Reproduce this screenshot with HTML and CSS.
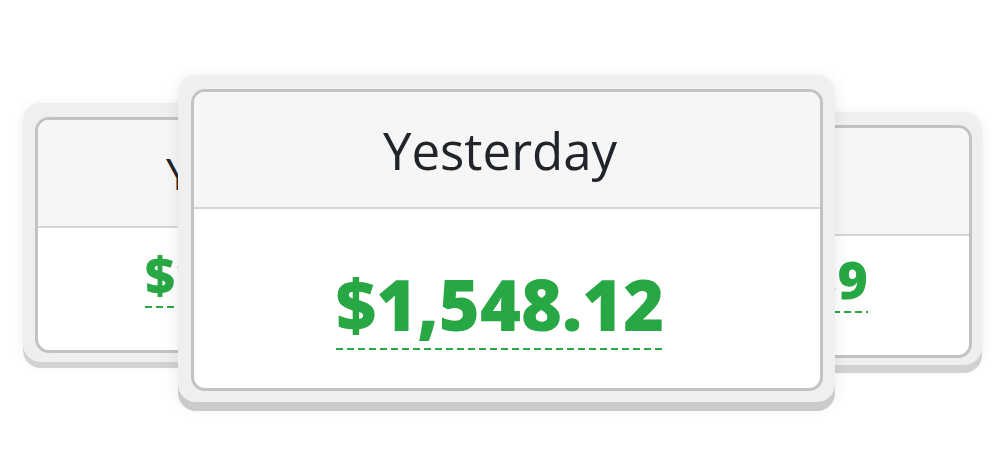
FILE: index.html
```html
<!DOCTYPE html>
<html lang="en">
<head>
<meta charset="utf-8">
<title>Stats carousel</title>
<link rel="stylesheet" href="styles.css">
</head>
<body>
<div class="stage">
  <div class="shell shell-left">
    <div class="card">
      <div class="card-head side-head">Yesterday</div>
      <div class="card-body side-body"><span class="amount side-amount">$1,231.40</span></div>
    </div>
  </div>
  <div class="shell shell-right">
    <div class="card">
      <div class="card-head side-head">Today</div>
      <div class="card-body side-body right-body"><span class="amount side-amount">$1,204.39</span></div>
    </div>
  </div>
  <div class="shell shell-main">
    <div class="card">
      <div class="card-head main-head"><span class="head-text">Yesterday</span></div>
      <div class="card-body main-body"><span class="amount main-amount">$1,548.12</span></div>
    </div>
  </div>
</div>
</body>
</html>
```

FILE: styles.css
```css
* { box-sizing: border-box; }
html, body { margin: 0; padding: 0; background: #ffffff; }
body { font-family: "Open Sans", "Noto Sans", sans-serif; color: #212529; }

.stage {
  position: relative;
  width: 1000px;
  height: 476px;
  padding: 75px 0 0 178px;
}

.shell {
  display: flex;
  flex-direction: column;
  background: #efefef;
  border-radius: 18px;
  box-shadow: 0 9px 0 #cbcbcb, 0 3px 16px rgba(0, 0, 0, 0.09);
}

.shell-main {
  position: relative;
  z-index: 3;
  width: 657px;
  height: 327px;
  padding: 14px 12px 11px 13px;
}

.shell-left {
  position: absolute;
  z-index: 1;
  left: 23px;
  top: 103px;
  width: 488px;
  height: 259px;
  padding: 14px 12px 9px 12px;
  box-shadow: 0 6px 0 #d2d2d2, 0 2px 12px rgba(0, 0, 0, 0.08);
}

.shell-right {
  position: absolute;
  z-index: 1;
  left: 508px;
  top: 112px;
  width: 474px;
  height: 253px;
  padding: 13px 10px 7px 12px;
  box-shadow: 0 8px 0 #d2d2d2, 0 2px 12px rgba(0, 0, 0, 0.08);
}

.card {
  flex: 1;
  display: flex;
  flex-direction: column;
  background: #ffffff;
  border: 3px solid #c2c2c2;
  border-radius: 14px;
  overflow: hidden;
}

.card-head {
  display: flex;
  align-items: center;
  justify-content: center;
  background: #f6f6f6;
  border-bottom: 2px solid #d6d6d6;
  line-height: 1;
  font-weight: 500;
  color: #212529;
}

.main-head {
  height: 117px;
  font-size: 51px;
  padding: 2px 14px 0 0;
}

.head-text { display: inline-block; }

.side-head {
  height: 108px;
  font-size: 44px;
}

.card-body {
  flex: 1;
  display: flex;
  justify-content: center;
  align-items: flex-start;
}

.main-body { padding: 60px 14px 0 0; }
.side-body { padding-top: 20px; }
.right-body { padding-top: 17px; }

.amount {
  display: inline-block;
  line-height: 1;
  font-weight: 800;
  color: #28a745;
  background-image: linear-gradient(to right, #28a745 7px, transparent 7px);
  background-size: 11px 2px;
  background-repeat: repeat-x;
  background-position: left bottom;
}

.main-amount {
  font-size: 70px;
  padding-bottom: 11px;
}

.side-amount {
  font-size: 52px;
  padding-bottom: 8px;
}
```
